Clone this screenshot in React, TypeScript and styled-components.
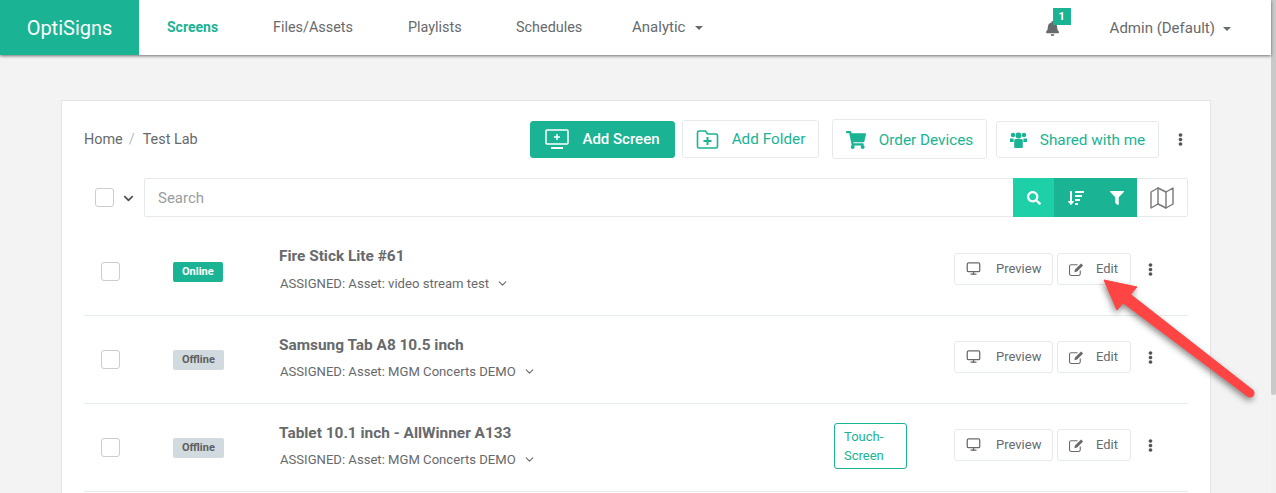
import * as React from "react";
import styled, { createGlobalStyle } from "styled-components";
import {
  FaBell,
  FaEllipsisV,
  FaFilter,
  FaSearch,
  FaShoppingCart,
  FaSortAmountDown,
  FaChevronDown,
} from "react-icons/fa";
import { FiChevronDown, FiMap, FiMonitor } from "react-icons/fi";

const GREEN = "#1ab394";
const TEXT = "#676a6c";
const LINE = "#e7eaec";

const GlobalStyle = createGlobalStyle`
  html, body {
    margin: 0;
    height: 100%;
    overflow: hidden;
    background: #f3f3f3;
  }
  body {
    font-family: Roboto, "Liberation Sans", sans-serif;
    font-size: 14px;
    color: ${TEXT};
  }
  * { box-sizing: border-box; }
`;

const Shell = styled.div`
  display: flex;
  width: 1276px;
  height: 493px;
  overflow: hidden;
  position: relative;
`;

const Page = styled.div`
  flex: 1;
  min-width: 0;
`;

const ScrollTrack = styled.div`
  width: 5px;
  background: #f1f1f1;
`;

const ScrollThumb = styled.div`
  height: 395px;
  background: #c9c9c9;
  border-radius: 0 0 3px 3px;
`;

const Nav = styled.nav`
  display: flex;
  align-items: stretch;
  height: 55px;
  background: #fff;
  box-shadow: 0 1px 3px rgba(0, 0, 0, 0.55);
  position: relative;
`;

const Logo = styled.div`
  width: 139px;
  background: ${GREEN};
  color: #fff;
  font-size: 20px;
  display: flex;
  align-items: center;
  justify-content: center;
`;

const NavLinks = styled.div`
  display: flex;
  align-items: center;
  flex: 1;
  padding: 0 0 0 28px;
`;

const NavLink = styled.a<{ $w: number; $active?: boolean; $size?: number }>`
  width: ${(p) => p.$w}px;
  font-weight: ${(p) => (p.$active ? 700 : 400)};
  color: ${(p) => (p.$active ? GREEN : TEXT)};
  font-size: ${(p) => p.$size ?? 14.4}px;
  display: flex;
  align-items: center;
  white-space: nowrap;
  margin-top: -1px;
`;

const Caret = styled.span<{ $ml?: number }>`
  display: inline-block;
  border-top: 4px solid ${TEXT};
  border-left: 4px solid transparent;
  border-right: 4px solid transparent;
  margin-left: ${(p) => p.$ml ?? 8}px;
  margin-top: 2px;
`;

const NavRight = styled.div`
  display: flex;
  align-items: center;
  padding-right: 40px;
`;

const BellWrap = styled.div`
  position: relative;
  width: 65px;
  display: flex;
  font-size: 15px;
  margin-top: 1px;
`;

const BellBadge = styled.span`
  position: absolute;
  left: 8px;
  top: -13px;
  width: 18px;
  height: 17px;
  background: ${GREEN};
  color: #fff;
  font-size: 11px;
  font-weight: 700;
  display: flex;
  align-items: center;
  justify-content: center;
`;

const AdminMenu = styled.div`
  display: flex;
  align-items: center;
  font-size: 15px;
  white-space: nowrap;
`;

const Content = styled.main`
  padding: 45px 60px 0 61px;
`;

const Card = styled.section`
  background: #fff;
  border: 1px solid #e4e4e4;
  padding: 18px 22px 0;
  height: 420px;
`;

const TopBar = styled.div`
  display: flex;
  align-items: center;
  height: 40px;
  padding-right: 1px;
`;

const Breadcrumb = styled.div`
  flex: 1;
  font-size: 14.4px;
  display: flex;
  margin-top: 1px;
`;

const Crumb = styled.span`
  color: #b9bcbe;
  margin: 0 8px 0 6px;
`;

const TopButton = styled.button<{ $primary?: boolean; $w: number; $h: number; $mr: number; $dy?: number }>`
  width: ${(p) => p.$w}px;
  height: ${(p) => p.$h}px;
  margin-right: ${(p) => p.$mr}px;
  padding: ${(p) => p.$dy ?? 0}px 0 0;
  display: flex;
  align-items: center;
  justify-content: center;
  gap: 13px;
  font-family: inherit;
  font-size: ${(p) => (p.$primary ? 15 : 15.3)}px;
  font-weight: ${(p) => (p.$primary ? 500 : 400)};
  border-radius: 3px;
  border: 1px solid ${(p) => (p.$primary ? GREEN : LINE)};
  background: ${(p) => (p.$primary ? GREEN : "#fff")};
  color: ${(p) => (p.$primary ? "#fff" : GREEN)};
  white-space: nowrap;
`;

const Kebab = styled.span<{ $ml?: number; $mt?: number }>`
  display: inline-flex;
  color: #555;
  font-size: 13px;
  margin-left: ${(p) => p.$ml ?? 0}px;
  margin-top: ${(p) => p.$mt ?? 0}px;
`;

const SearchRow = styled.div`
  display: flex;
  align-items: center;
  height: 39px;
  margin-top: 19px;
`;

const Check = styled.span`
  display: block;
  width: 19px;
  height: 19px;
  border: 1px solid #ccc;
  border-radius: 3px;
  background: #fff;
`;

const SelectAll = styled.div`
  display: flex;
  align-items: center;
  width: 60px;
  padding-left: 11px;
  gap: 9px;
  color: #555;
  font-size: 11px;
  svg {
    margin-top: 2px;
  }
`;

const SearchBox = styled.div`
  flex: 1;
  height: 39px;
  display: flex;
  align-items: stretch;
  border: 1px solid ${LINE};
  border-radius: 2px;
`;

const SearchInput = styled.div`
  flex: 1;
  display: flex;
  align-items: center;
  padding-left: 13px;
  font-size: 15px;
  color: #9a9da0;
`;

const SearchAction = styled.div<{ $light?: boolean; $w: number }>`
  width: ${(p) => p.$w}px;
  margin: -1px 0;
  display: flex;
  align-items: center;
  justify-content: center;
  background: ${(p) => (p.$light ? "#1dd0a8" : GREEN)};
  color: #fff;
  font-size: 14px;
`;

const MapToggle = styled.div`
  width: 50px;
  display: flex;
  align-items: center;
  justify-content: center;
  color: #777;
  font-size: 24px;
`;

const List = styled.div`
  margin-top: 11px;
`;

const Row = styled.div`
  display: flex;
  align-items: center;
  height: 88px;
  border-bottom: 1px solid ${LINE};
`;

const CheckCell = styled.div`
  width: 89px;
  padding-left: 17px;
`;

const StatusCell = styled.div`
  width: 106px;
`;

const Status = styled.span<{ $online?: boolean }>`
  display: inline-flex;
  align-items: center;
  justify-content: center;
  height: 20px;
  padding: 0 9px;
  border-radius: 2px;
  font-size: 11px;
  font-weight: 700;
  background: ${(p) => (p.$online ? GREEN : "#d1dade")};
  color: ${(p) => (p.$online ? "#fff" : "#5e5e5e")};
`;

const Info = styled.div`
  flex: 1;
  margin-top: -3px;
  ${Row}:first-child & {
    margin-top: -4px;
  }
`;

const Title = styled.div`
  font-size: 15.4px;
  font-weight: 700;
  line-height: 17px;
`;

const Assigned = styled.div`
  display: flex;
  align-items: center;
  gap: 7px;
  font-size: 13.1px;
  line-height: 16px;
  margin: 10px 0 0 1px;
  color: #676a6c;
  ${Row}:first-child & {
    margin-top: 11px;
  }
`;

const Tag = styled.div`
  width: 73px;
  height: 46px;
  border: 1px solid ${GREEN};
  border-radius: 3px;
  color: ${GREEN};
  font-size: 13px;
  line-height: 19px;
  padding: 3px 9px;
  margin-right: 47px;
  margin-top: -4px;
`;

const RowButton = styled.button<{ $w: number }>`
  width: ${(p) => p.$w}px;
  height: 32px;
  margin-right: 4px;
  display: flex;
  align-items: center;
  padding: 0 0 0 11px;
  font-family: inherit;
  font-size: 13px;
  color: ${TEXT};
  background: #fff;
  border: 1px solid ${LINE};
  border-radius: 3px;
`;

const RowIcon = styled.span<{ $gap: number }>`
  display: inline-flex;
  font-size: 15px;
  margin-right: ${(p) => p.$gap}px;
`;

const Actions = styled.div`
  display: flex;
  align-items: center;
  width: 234px;
  margin-top: -6px;
`;

const ArrowOverlay = styled.svg`
  position: absolute;
  left: 1095px;
  top: 270px;
  width: 170px;
  height: 140px;
  filter: drop-shadow(-1px 3px 3px rgba(0, 0, 0, 0.45));
  pointer-events: none;
`;

const MonitorPlus = () => (
  <svg width="24" height="21" viewBox="0 0 24 21" fill="none" stroke="#fff" strokeWidth="1.5">
    <rect x="1" y="1" width="22" height="14" rx="1" />
    <path d="M12 5v6M9 8h6" />
    <path d="M6 19h12" strokeWidth="2" />
  </svg>
);

const FolderPlus = () => (
  <svg width="23" height="19" viewBox="0 0 22 19" fill="none" stroke={GREEN} strokeWidth="1.6">
    <path d="M1 2.5a1.5 1.5 0 0 1 1.5-1.5H9l2 3h8.5A1.5 1.5 0 0 1 21 5.5v11a1.5 1.5 0 0 1-1.5 1.5h-17A1.5 1.5 0 0 1 1 16.5z" />
    <path d="M11 7v8M7 11h8" strokeWidth="2" />
  </svg>
);

const UsersIcon = () => (
  <svg width="17" height="17" viewBox="0 0 17 17" fill={GREEN}>
    <circle cx="3" cy="4" r="2.2" />
    <circle cx="14" cy="4" r="2.2" />
    <circle cx="8.5" cy="4.5" r="3" />
    <path d="M0 7.5h3.6v3.5H0.6A.6.6 0 0 1 0 10.4zM17 7.5h-3.6v3.5h3a.6.6 0 0 0 .6-.6z" />
    <path d="M4.2 9.5a1.5 1.5 0 0 1 1.5-1.5h5.6a1.5 1.5 0 0 1 1.5 1.5V16a1 1 0 0 1-1 1H5.2a1 1 0 0 1-1-1z" />
  </svg>
);

const EditIcon = () => (
  <svg width="15" height="14" viewBox="0 0 14 13" fill="none" stroke={TEXT}>
    <path d="M8 2.5H2a1.5 1.5 0 0 0-1.5 1.5v7A1.5 1.5 0 0 0 2 12.5h7a1.5 1.5 0 0 0 1.5-1.5V8" />
    <path d="M5 9.5l.6-2.6L11.2 1.3l2 2L7.6 8.9z" fill={TEXT} stroke="none" />
  </svg>
);

const devices = [
  { name: "Fire Stick Lite #61", asset: "video stream test", online: true },
  { name: "Samsung Tab A8 10.5 inch", asset: "MGM Concerts DEMO" },
  { name: "Tablet 10.1 inch - AllWinner A133", asset: "MGM Concerts DEMO", touch: true },
];

export default function App() {
  return (
    <Shell>
      <GlobalStyle />
      <Page>
        <Nav>
          <Logo>OptiSigns</Logo>
          <NavLinks>
            <NavLink $w={106} $active $size={14}>Screens</NavLink>
            <NavLink $w={135}>Files/Assets</NavLink>
            <NavLink $w={108}>Playlists</NavLink>
            <NavLink $w={116}>Schedules</NavLink>
            <NavLink $w={100} $size={15}>Analytic<Caret $ml={10} /></NavLink>
          </NavLinks>
          <NavRight>
            <BellWrap>
              <FaBell />
              <BellBadge>1</BellBadge>
            </BellWrap>
            <AdminMenu>Admin (Default)<Caret /></AdminMenu>
          </NavRight>
        </Nav>
        <Content>
          <Card>
            <TopBar>
              <Breadcrumb>
                Home<Crumb>/</Crumb>Test Lab
              </Breadcrumb>
              <TopButton $primary $w={145} $h={37} $mr={7}><MonitorPlus />Add Screen</TopButton>
              <TopButton $w={137} $h={38} $mr={13}><FolderPlus />Add Folder</TopButton>
              <TopButton $w={155} $h={40} $mr={9} $dy={2}><FaShoppingCart size={20} />Order Devices</TopButton>
              <TopButton $w={163} $h={37} $mr={0} $dy={1}><UsersIcon />Shared with me</TopButton>
              <Kebab $ml={15}><FaEllipsisV /></Kebab>
            </TopBar>
            <SearchRow>
              <SelectAll><Check /><FaChevronDown /></SelectAll>
              <SearchBox>
                <SearchInput>Search</SearchInput>
                <SearchAction $light $w={41}><FaSearch /></SearchAction>
                <SearchAction $w={43}><FaSortAmountDown size={16} /></SearchAction>
                <SearchAction $w={40}><FaFilter /></SearchAction>
                <MapToggle><FiMap strokeWidth={1.4} /></MapToggle>
              </SearchBox>
            </SearchRow>
            <List>
              {devices.map((d) => (
                <Row key={d.name}>
                  <CheckCell><Check /></CheckCell>
                  <StatusCell>
                    <Status $online={d.online}>{d.online ? "Online" : "Offline"}</Status>
                  </StatusCell>
                  <Info>
                    <Title>{d.name}</Title>
                    <Assigned>
                      ASSIGNED: Asset: {d.asset}
                      <FiChevronDown size={13} />
                    </Assigned>
                  </Info>
                  {d.touch && <Tag>Touch-Screen</Tag>}
                  <Actions>
                    <RowButton $w={99}>
                      <RowIcon $gap={15}><FiMonitor /></RowIcon>Preview
                    </RowButton>
                    <RowButton $w={74}>
                      <RowIcon $gap={12}><EditIcon /></RowIcon>Edit
                    </RowButton>
                    <Kebab $ml={9} $mt={2}><FaEllipsisV /></Kebab>
                  </Actions>
                </Row>
              ))}
            </List>
          </Card>
        </Content>
      </Page>
      <ScrollTrack><ScrollThumb /></ScrollTrack>
      <ArrowOverlay viewBox="0 0 170 140">
        <path d="M34.7 23.3 L157.7 119.4 A4.5 4.5 0 0 1 152.3 126.6 L27.3 32.7 Z" fill="#ff4444" />
        <path d="M9 10 L42 17 L22 40 Z" fill="#ff4444" stroke="#ff4444" strokeLinejoin="round" />
      </ArrowOverlay>
    </Shell>
  );
}
